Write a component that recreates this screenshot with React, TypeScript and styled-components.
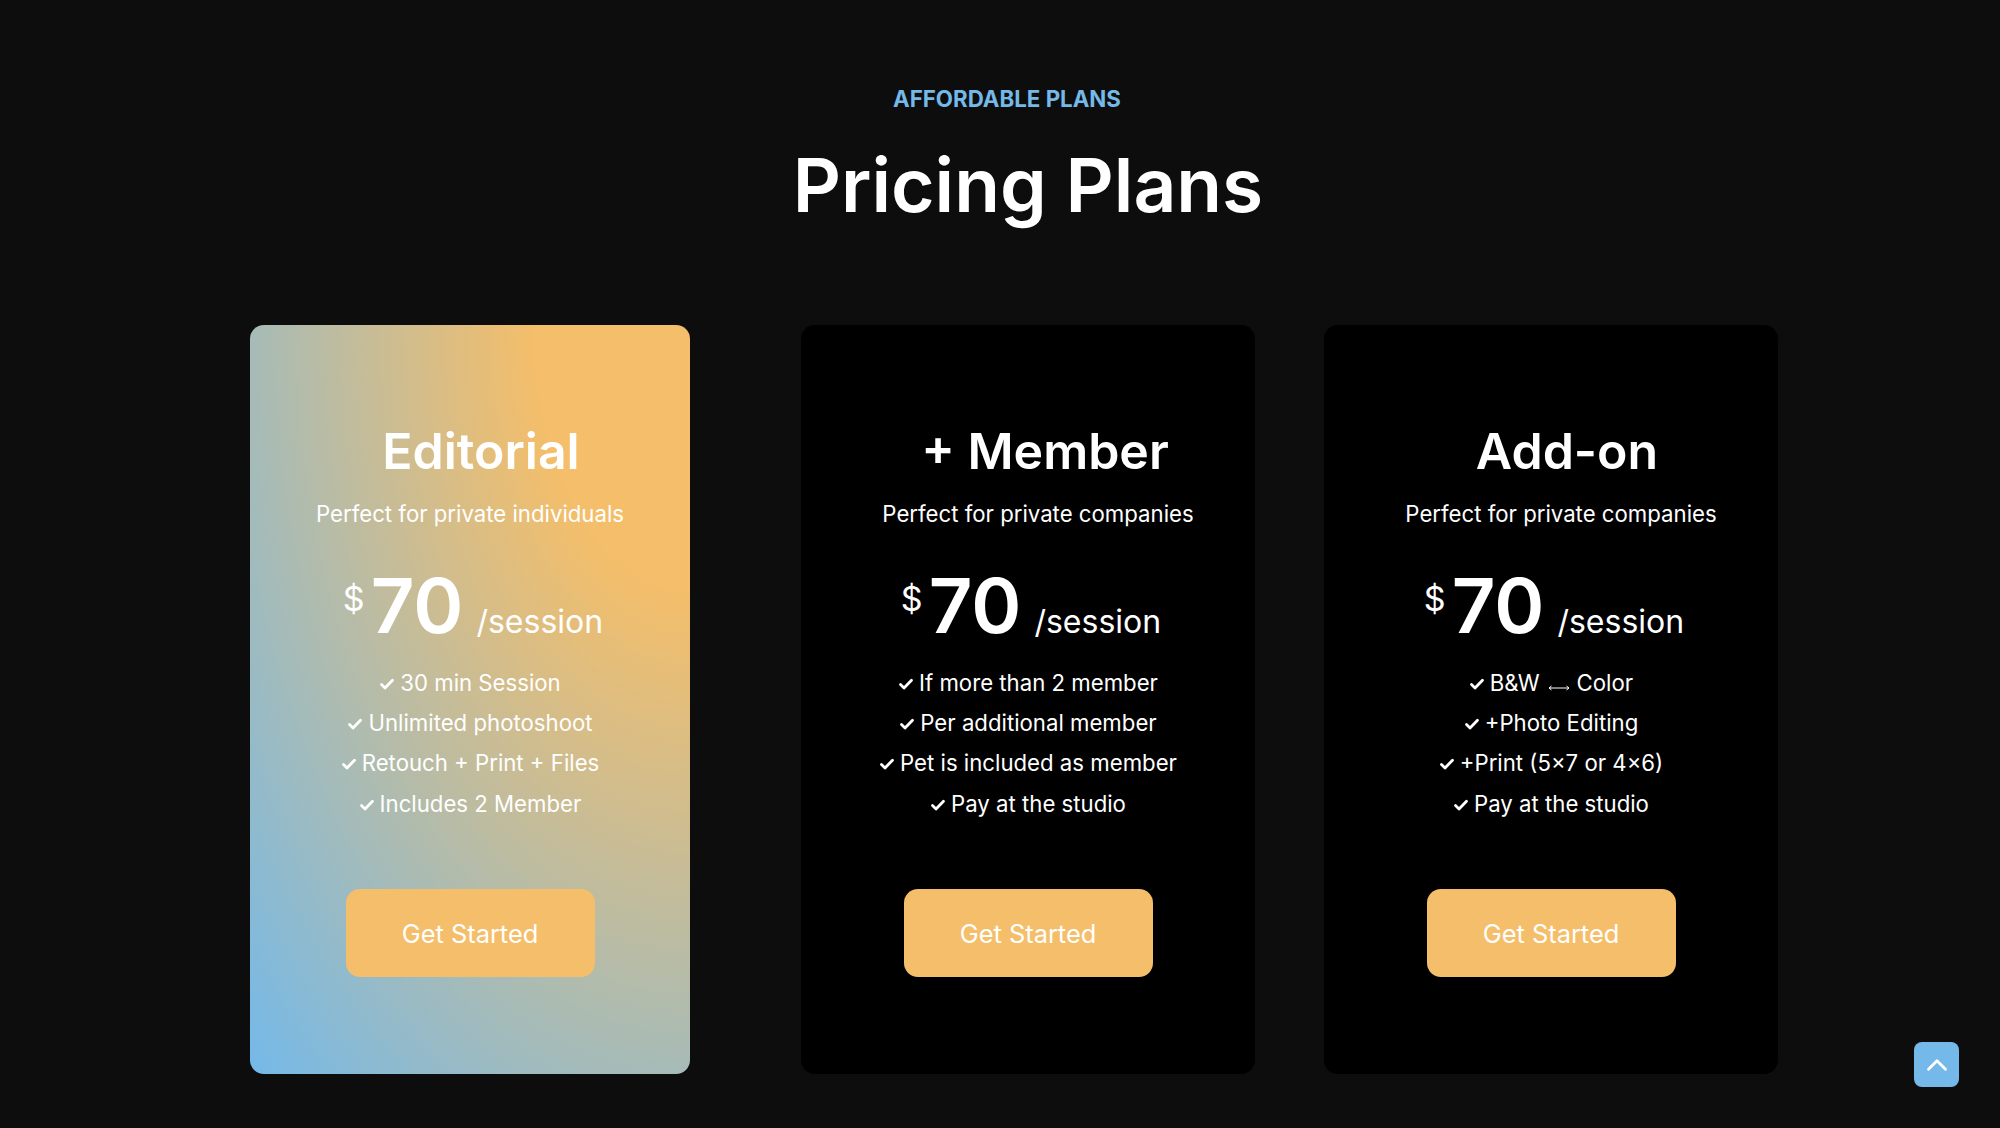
import React from "react";
import styled, { createGlobalStyle } from "styled-components";
import { ChevronUp } from "lucide-react";

const Global = createGlobalStyle`
  html, body { margin: 0; padding: 0; background: #0d0d0d; }
  body { font-family: Inter, "Noto Sans", sans-serif; color: #fff; }
`;

const Page = styled.main`
  position: relative;
  width: 2000px;
  height: 1128px;
  box-sizing: border-box;
  padding-top: 85px;
  background: #0d0d0d;
  overflow: hidden;
`;

const Eyebrow = styled.div`
  margin-left: 893px;
  width: 227px;
  font-size: 22.3px;
  line-height: 28px;
  font-weight: 700;
  color: #74b9e7;
  white-space: nowrap;
`;

const Title = styled.h1`
  margin: 27px 0 0 56px;
  text-align: center;
  font-size: 74.8px;
  line-height: 90px;
  font-weight: 600;
  color: #fff;
`;

const Cards = styled.section`
  display: flex;
  margin-top: 95px;
  padding-left: 250px;
`;

const Card = styled.article<{ $wide?: boolean; $gradient?: boolean; $gap: number }>`
  box-sizing: border-box;
  width: ${(p) => (p.$wide ? 454 : 440)}px;
  height: 749px;
  margin-right: ${(p) => p.$gap}px;
  padding-top: 92px;
  border-radius: 14px;
  display: flex;
  flex-direction: column;
  align-items: center;
  background: ${(p) => (p.$gradient ? "radial-gradient(at top right, #f4be6a 25%, #74b9e9 100%)" : "#000")};
`;

const CardTitle = styled.h2<{ $shift: number }>`
  margin: 0;
  padding-left: ${(p) => p.$shift}px;
  font-size: 50px;
  line-height: 68px;
  font-weight: 600;
  white-space: nowrap;
`;

const Subtitle = styled.p<{ $shift: number }>`
  margin: 12px 0 0;
  padding-left: ${(p) => p.$shift}px;
  font-size: 22.2px;
  line-height: 34px;
  white-space: nowrap;
`;

const Price = styled.div<{ $shift: number }>`
  display: flex;
  align-items: baseline;
  margin-top: 26px;
  padding-left: ${(p) => p.$shift}px;
  height: 96px;
  white-space: nowrap;
`;

const Currency = styled.span`
  align-self: flex-start;
  margin: 22px 6px 0 0;
  font-size: 34px;
  line-height: 40px;
`;

const Amount = styled.span`
  font-size: 76px;
  line-height: 96px;
  font-weight: 600;
`;

const Unit = styled.span`
  margin-left: 13px;
  font-size: 32px;
  line-height: 40px;
`;

const Features = styled.ul`
  list-style: none;
  margin: 9px 0 0;
  padding: 0;
  display: flex;
  flex-direction: column;
  align-items: center;
`;

const Feature = styled.li`
  display: flex;
  align-items: center;
  height: 40.3px;
  font-size: 22.2px;
  white-space: nowrap;
`;

const SwapArrow = styled(({ className }: { className?: string }) => (
  <svg className={className} viewBox="0 0 22 8" role="img" aria-label="to">
    <path d="M1 4h20M3.5 2 1 4l2.5 2M18.5 2 21 4l-2.5 2" fill="none" stroke="currentColor" strokeWidth="1" />
  </svg>
))`
  width: 22px;
  height: 8px;
  margin: 11px 7px 0 8px;
  flex: none;
`;

const Tick = styled(({ className }: { className?: string }) => (
  <svg className={className} viewBox="0 0 16 16" aria-hidden="true">
    <path d="M2.5 8.6 6 12l7.5-7.8" fill="none" stroke="currentColor" strokeWidth="2.8" strokeLinecap="round" strokeLinejoin="round" />
  </svg>
))`
  width: 16px;
  height: 16px;
  margin: 3px 5px 0 0;
  flex: none;
`;

const CTA = styled.button`
  display: block;
  width: 249px;
  height: 88px;
  margin-top: 66px;
  border: 0;
  border-radius: 14px;
  background: #f4be6a;
  color: #fff;
  font-family: inherit;
  font-size: 25.4px;
`;

const BackToTop = styled.button`
  position: absolute;
  left: 1914px;
  top: 1042px;
  width: 45px;
  height: 45px;
  padding: 0;
  border: 0;
  border-radius: 8px;
  background: #74b9e9;
  color: #fff;
  display: flex;
  align-items: center;
  justify-content: center;
`;

const plans = [
  {
    name: "Editorial", sub: "Perfect for private individuals", titleShift: 22, subShift: 0, wide: false, gradient: true, gap: 111,
    items: ["30 min Session", "Unlimited photoshoot", "Retouch + Print + Files", "Includes 2 Member"],
  },
  {
    name: "+ Member", sub: "Perfect for private companies", titleShift: 34, subShift: 20, wide: true, gradient: false, gap: 69,
    items: ["If more than 2 member", "Per additional member", "Pet is included as member", "Pay at the studio"],
  },
  {
    name: "Add-on", sub: "Perfect for private companies", titleShift: 32, subShift: 20, wide: true, gradient: false, gap: 0,
    items: [["B&W", "Color"], "+Photo Editing", "+Print (5×7 or 4×6)", "Pay at the studio"],
  },
];

export default function App() {
  return (
    <Page>
      <Global />
      <Eyebrow>AFFORDABLE PLANS</Eyebrow>
      <Title>Pricing Plans</Title>
      <Cards>
        {plans.map((p) => (
          <Card key={p.name} $wide={p.wide} $gradient={p.gradient} $gap={p.gap}>
            <CardTitle $shift={p.titleShift}>{p.name}</CardTitle>
            <Subtitle $shift={p.subShift}>{p.sub}</Subtitle>
            <Price $shift={6}>
              <Currency>$</Currency>
              <Amount>70</Amount>
              <Unit>/session</Unit>
            </Price>
            <Features>
              {p.items.map((i) => (
                <Feature key={String(i)}>
                  <Tick />
                  {Array.isArray(i) ? (
                    <>{i[0]}<SwapArrow />{i[1]}</>
                  ) : i}
                </Feature>
              ))}
            </Features>
            <CTA>Get Started</CTA>
          </Card>
        ))}
      </Cards>
      <BackToTop aria-label="Back to top"><ChevronUp size={34} strokeWidth={2} /></BackToTop>
    </Page>
  );
}
